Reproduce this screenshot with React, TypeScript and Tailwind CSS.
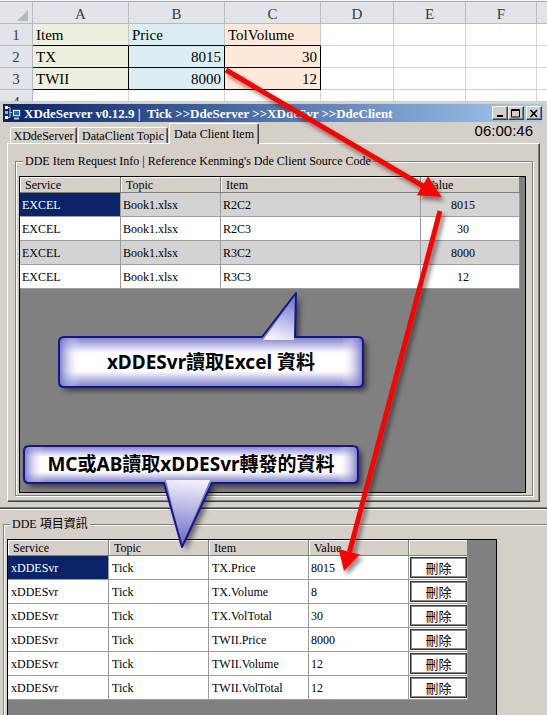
import React from "react";

const excelCols = [
  { label: "A", w: "w-[96px]" },
  { label: "B", w: "w-[96px]" },
  { label: "C", w: "w-[96px]" },
  { label: "D", w: "w-[73px]" },
  { label: "E", w: "w-[72px]" },
  { label: "F", w: "w-[71px]" },
];

const excelRows = [
  { n: "1", cells: [{ t: "Item" }, { t: "Price" }, { t: "TolVolume" }] },
  { n: "2", cells: [{ t: "TX" }, { t: "8015", r: true }, { t: "30", r: true }] },
  { n: "3", cells: [{ t: "TWII" }, { t: "8000", r: true }, { t: "12", r: true }] },
];

const fills = ["bg-[#ebf1de]", "bg-[#daeef3]", "bg-[#fde9d9]"];

const upperRows = [
  ["EXCEL", "Book1.xlsx", "R2C2", "8015"],
  ["EXCEL", "Book1.xlsx", "R2C3", "30"],
  ["EXCEL", "Book1.xlsx", "R3C2", "8000"],
  ["EXCEL", "Book1.xlsx", "R3C3", "12"],
];

const lowerRows = [
  ["xDDESvr", "Tick", "TX.Price", "8015"],
  ["xDDESvr", "Tick", "TX.Volume", "8"],
  ["xDDESvr", "Tick", "TX.VolTotal", "30"],
  ["xDDESvr", "Tick", "TWII.Price", "8000"],
  ["xDDESvr", "Tick", "TWII.Volume", "12"],
  ["xDDESvr", "Tick", "TWII.VolTotal", "12"],
];

function EmptyCells() {
  return (
    <>
      <div className="w-[73px] shrink-0 border-r border-b border-[#d4d4d4]" />
      <div className="w-[72px] shrink-0 border-r border-b border-[#d4d4d4]" />
      <div className="w-[71px] shrink-0 border-r border-b border-[#d4d4d4]" />
      <div className="flex-1 border-b border-[#d4d4d4]" />
    </>
  );
}

function ExcelSheet() {
  return (
    <div className="h-[101px] overflow-hidden bg-white text-[15px] leading-[17px]">
      <div className="h-[2px] border-b border-[#a9adb3] bg-[#f4f4f4]" />
      <div className="flex h-[22px] bg-[#e1e5ea] text-[#3a3a3a]">
        <div className="w-[33px] shrink-0 border-r border-b border-[#b6bbc2]">
          <svg width="32" height="21" viewBox="0 0 32 21">
            <polygon points="28,8 28,19 17,19" fill="#b4b8bd" />
          </svg>
        </div>
        {excelCols.map((c) => (
          <div
            key={c.label}
            className={`${c.w} shrink-0 flex items-center justify-center border-r border-b border-[#b6bbc2] pt-[3px]`}
          >
            {c.label}
          </div>
        ))}
        <div className="flex-1 border-b border-[#b6bbc2]" />
      </div>
      {excelRows.map((row) => (
        <div key={row.n} className="flex h-[22px]">
          <div className="w-[33px] shrink-0 flex items-end justify-center bg-[#e1e5ea] border-r border-b border-[#b6bbc2] pb-[1px] text-[#3a3a3a]">
            {row.n}
          </div>
          {row.cells.map((c, i) => (
            <div
              key={i}
              className={`w-[96px] shrink-0 flex items-end px-[3px] pb-[1px] border-r border-b ${
                row.n === "1" ? "border-r-[#c8c8c8] border-b-black" : "border-black"
              } ${fills[i]} ${c.r ? "justify-end" : ""}`}
            >
              {c.t}
            </div>
          ))}
          <EmptyCells />
        </div>
      ))}
      <div className="flex h-[22px]">
        <div className="w-[33px] shrink-0 flex items-end justify-center bg-[#e1e5ea] border-r border-[#b6bbc2] pb-[1px] text-[#3a3a3a]">
          4
        </div>
        <div className="w-[96px] shrink-0 border-r border-[#d4d4d4]" />
        <div className="w-[96px] shrink-0 border-r border-[#d4d4d4]" />
        <div className="w-[96px] shrink-0 border-r border-[#d4d4d4]" />
        <div className="w-[73px] shrink-0 border-r border-[#d4d4d4]" />
        <div className="w-[72px] shrink-0 border-r border-[#d4d4d4]" />
        <div className="w-[71px] shrink-0 border-r border-[#d4d4d4]" />
      </div>
    </div>
  );
}

function AppIcon() {
  return (
    <svg width="18" height="16" viewBox="0 0 18 16" className="ml-[1px] shrink-0">
      <rect x="1" y="1" width="3" height="3" fill="#ffffff" />
      <rect x="1" y="6" width="3" height="3" fill="#8fb8f0" />
      <rect x="1" y="11" width="3" height="3" fill="#ffffff" />
      <path d="M4 2.5h2v10H4M6 7.5h2" stroke="#c9d6ea" fill="none" />
      <rect x="8.5" y="4.5" width="8" height="7" fill="#e6ecf6" stroke="#2c4c8c" />
      <rect x="10" y="6" width="5" height="4" fill="#2a6ad6" />
      <rect x="10" y="12.5" width="5" height="2" fill="#c6ced9" />
    </svg>
  );
}

function CaptionBtn({ kind }: { kind: "min" | "max" | "close" }) {
  return (
    <div className="flex h-[14px] w-[16px] items-center justify-center border border-t-white border-l-white border-r-[#404040] border-b-[#404040] bg-[#d4d0c8] shadow-[inset_-1px_-1px_0_#808080]">
      <svg width="10" height="9" viewBox="0 0 10 9">
        {kind === "min" && <rect x="2" y="6" width="6" height="2" fill="#000" />}
        {kind === "max" && (
          <path d="M0.5 0.5h8v7.5h-8z M0.5 1.5h8" stroke="#000" fill="none" />
        )}
        {kind === "close" && (
          <path d="M1.5 1l6.5 7M8 1L1.5 8" stroke="#000" strokeWidth="1.6" fill="none" />
        )}
      </svg>
    </div>
  );
}

function TitleBar() {
  return (
    <div className="flex h-[18px] items-center bg-linear-to-r from-[#0a246a] to-[#a6caf0]">
      <AppIcon />
      <span className="ml-[2px] whitespace-pre text-[13px] font-bold leading-none text-white">
        {"XDdeServer v0.12.9 |  Tick >>DdeServer >>XDdeSvr >>DdeClient"}
      </span>
      <div className="ml-auto mr-[1px] flex items-center">
        <CaptionBtn kind="min" />
        <CaptionBtn kind="max" />
        <div className="w-[2px]" />
        <CaptionBtn kind="close" />
      </div>
    </div>
  );
}

function Tab({ label, w }: { label: string; w: string }) {
  return (
    <div
      className={`${w} flex h-[16px] items-center justify-center rounded-t-[2px] border-t border-l border-white border-r border-r-[#404040] bg-[#d4d0c8] text-[12px] leading-none shadow-[inset_-1px_0_0_#808080]`}
    >
      {label}
    </div>
  );
}

function UpperGrid() {
  const widths = ["w-[101px]", "w-[100px]", "w-[200px]", "w-[99px]"];
  const heads = ["Service", "Topic", "Item", "Value"];
  return (
    <div className="ml-[3px] mt-[14px] h-[317px] w-[507px] border border-black bg-[#808080] text-[12px]">
      <div className="flex h-[16px]">
        {heads.map((h, i) => (
          <div
            key={h}
            className={`${widths[i]} flex shrink-0 items-center border-r border-b border-[#808080] bg-[#d4d0c8] pl-[5px] shadow-[inset_1px_1px_0_#fff]`}
          >
            {h}
          </div>
        ))}
      </div>
      {upperRows.map((r, ri) => (
        <div key={ri} className="flex h-[24px]">
          {r.map((c, ci) => (
            <div
              key={ci}
              className={`${widths[ci]} flex shrink-0 items-center border-r border-b border-[#9d9d9d] ${
                ri === 0 && ci === 0
                  ? "bg-[#0a246a] text-white"
                  : ri % 2 === 0
                  ? "bg-[#d3d3d3]"
                  : "bg-white"
              } ${ci === 3 ? "justify-center pr-[14px]" : "pl-[2px]"}`}
            >
              {c}
            </div>
          ))}
        </div>
      ))}
    </div>
  );
}

function ServerWindow() {
  return (
    <div className="h-[408px] border-b border-[#404040] bg-[#d4d0c8] pt-[3px] pl-[3px] pr-[4px] shadow-[inset_0_-1px_0_#808080]">
      <TitleBar />
      <div className="flex h-[21px] items-end gap-[1px] pl-[7px]">
        <Tab label="XDdeServer" w="w-[67px]" />
        <Tab label="DataClient Topic" w="w-[90px]" />
        <div className="relative z-10 -mb-px flex h-[21px] w-[90px] items-center justify-center rounded-t-[2px] border-t border-l border-white border-r border-r-[#404040] bg-[#d4d0c8] text-[12px] leading-none shadow-[inset_-1px_0_0_#808080]">
          Data Client Item
        </div>
        <span className="ml-auto mr-[10px] mb-[4px] self-center font-['Liberation_Sans',sans-serif] text-[15px] leading-none">
          06:00:46
        </span>
      </div>
      <div className="ml-[4px] h-[359px] w-[533px] border border-t-white border-l-white border-r-[#404040] border-b-[#404040] shadow-[inset_-1px_-1px_0_#808080]">
        <div className="relative ml-[7px] mt-[17px] h-[335px] w-[518px] border border-[#808080] shadow-[inset_1px_1px_0_#fff,1px_1px_0_#fff]">
          <span className="absolute -top-[8px] left-[7px] whitespace-nowrap bg-[#d4d0c8] px-[2px] text-[12px] leading-[14px]">
            DDE Item Request Info | Reference Kenming's Dde Client Source Code
          </span>
          <UpperGrid />
        </div>
      </div>
    </div>
  );
}

function LowerGrid() {
  const widths = ["w-[101px]", "w-[100px]", "w-[100px]", "w-[100px]"];
  const heads = ["Service", "Topic", "Item", "Value"];
  return (
    <div className="ml-[3px] mt-[14px] h-[200px] w-[490px] border border-black bg-[#808080] text-[12px]">
      <div className="flex h-[16px]">
        {heads.map((h, i) => (
          <div
            key={h}
            className={`${widths[i]} flex shrink-0 items-center border-r border-b border-[#808080] bg-[#d4d0c8] pl-[5px] shadow-[inset_1px_1px_0_#fff]`}
          >
            {h}
          </div>
        ))}
        <div className="w-[59px] shrink-0 border-r border-b border-[#808080] bg-[#d4d0c8] shadow-[inset_1px_1px_0_#fff]" />
      </div>
      {lowerRows.map((r, ri) => (
        <div key={ri} className="flex h-[24px]">
          {r.map((c, ci) => (
            <div
              key={ci}
              className={`${widths[ci]} flex shrink-0 items-center border-r border-b border-[#9d9d9d] ${
                ri === 0 && ci === 0 ? "bg-[#0a246a] text-white" : "bg-white"
              } ${ci === 3 ? "pl-[2px]" : "pl-[3px]"}`}
            >
              {c}
            </div>
          ))}
          <div className="flex w-[59px] shrink-0 items-center border-r border-b border-[#9d9d9d] bg-white pl-[1px]">
            <div className="flex h-[21px] w-[57px] items-center justify-center border border-[#333] bg-white font-['Noto_Sans_CJK_TC',sans-serif] text-[13px] leading-none shadow-[inset_0_0_0_1px_#8a8a8a]">
              刪除
            </div>
          </div>
        </div>
      ))}
    </div>
  );
}

function ClientWindow() {
  return (
    <div className="h-[206px] overflow-hidden bg-[#d4d0c8] pl-[3px] pt-[15px] shadow-[inset_0_1px_0_#fff]">
      <div className="relative h-[240px] w-[580px] border border-[#808080] shadow-[inset_1px_1px_0_#fff,1px_1px_0_#fff]">
        <span className="absolute -top-[8px] left-[6px] whitespace-nowrap bg-[#d4d0c8] px-[2px] text-[12px] leading-[14px]">
          DDE 項目資訊
        </span>
        <LowerGrid />
      </div>
    </div>
  );
}

const callout1 =
  "M64 337 L262 337 L296 293 L295 337 L358 337 Q363 337 363 342 L363 382 Q363 387 358 387 L64 387 Q59 387 59 382 L59 342 Q59 337 64 337 Z";
const callout2 =
  "M29 446 L353 446 Q358 446 358 451 L358 478 Q358 483 353 483 L212 483 L182 547 L164 483 L29 483 Q24 483 24 478 L24 451 Q24 446 29 446 Z";

function Overlay() {
  return (
    <div className="pointer-events-none absolute inset-0">
      <svg width="547" height="715" viewBox="0 0 547 715" className="absolute left-0 top-0">
        <defs>
          <filter id="boxShadow" x="-10%" y="-20%" width="130%" height="160%">
            <feDropShadow dx="4" dy="4" stdDeviation="2.5" floodColor="#000" floodOpacity="0.5" />
          </filter>
          <filter id="arrowShadow" x="-20%" y="-20%" width="150%" height="150%">
            <feDropShadow dx="3" dy="4" stdDeviation="2" floodColor="#000" floodOpacity="0.45" />
          </filter>
          <linearGradient id="c1v" x1="0" y1="337" x2="0" y2="387" gradientUnits="userSpaceOnUse">
            <stop offset="0" stopColor="#7b7bcc" />
            <stop offset="0.32" stopColor="#ffffff" />
            <stop offset="0.68" stopColor="#ffffff" />
            <stop offset="1" stopColor="#7b7bcc" />
          </linearGradient>
          <linearGradient id="c1h" x1="59" y1="0" x2="363" y2="0" gradientUnits="userSpaceOnUse">
            <stop offset="0" stopColor="#6a6ac4" stopOpacity="0.9" />
            <stop offset="0.07" stopColor="#ffffff" stopOpacity="0" />
            <stop offset="0.93" stopColor="#ffffff" stopOpacity="0" />
            <stop offset="1" stopColor="#6a6ac4" stopOpacity="0.9" />
          </linearGradient>
          <linearGradient id="c1t" x1="296" y1="295" x2="280" y2="341" gradientUnits="userSpaceOnUse">
            <stop offset="0" stopColor="#6a6ac4" />
            <stop offset="1" stopColor="#f4f4ff" />
          </linearGradient>
          <linearGradient id="c2v" x1="0" y1="446" x2="0" y2="483" gradientUnits="userSpaceOnUse">
            <stop offset="0" stopColor="#7b7bcc" />
            <stop offset="0.3" stopColor="#ffffff" />
            <stop offset="0.7" stopColor="#ffffff" />
            <stop offset="1" stopColor="#7b7bcc" />
          </linearGradient>
          <linearGradient id="c2h" x1="24" y1="0" x2="358" y2="0" gradientUnits="userSpaceOnUse">
            <stop offset="0" stopColor="#6a6ac4" stopOpacity="0.9" />
            <stop offset="0.06" stopColor="#ffffff" stopOpacity="0" />
            <stop offset="0.94" stopColor="#ffffff" stopOpacity="0" />
            <stop offset="1" stopColor="#6a6ac4" stopOpacity="0.9" />
          </linearGradient>
          <linearGradient id="c2t" x1="188" y1="479" x2="182" y2="545" gradientUnits="userSpaceOnUse">
            <stop offset="0" stopColor="#f4f4ff" />
            <stop offset="1" stopColor="#6a6ac4" />
          </linearGradient>
        </defs>

        <g filter="url(#boxShadow)">
          <path d={callout1} fill="url(#c1v)" />
        </g>
        <path d={callout1} fill="url(#c1h)" />
        <polygon points="263,340 296,295 294,340" fill="url(#c1t)" />
        <path d={callout1} fill="none" stroke="#15158c" strokeWidth="2" strokeLinejoin="round" />

        <g filter="url(#boxShadow)">
          <path d={callout2} fill="url(#c2v)" />
        </g>
        <path d={callout2} fill="url(#c2h)" />
        <polygon points="166,480 210,480 182,545" fill="url(#c2t)" />
        <path d={callout2} fill="none" stroke="#15158c" strokeWidth="2" strokeLinejoin="round" />

        <g filter="url(#arrowShadow)">
          <line x1="226" y1="70" x2="423" y2="186" stroke="#ff0000" strokeWidth="5" />
          <polygon points="441.5,197 416.9,195.3 428.1,176.3" fill="#ff0000" />
        </g>
        <g filter="url(#arrowShadow)">
          <line x1="440" y1="211" x2="349.5" y2="552" stroke="#ff0000" strokeWidth="5" />
          <polygon points="344,571 338.6,548.9 359.8,554.5" fill="#ff0000" />
        </g>
      </svg>
      <div className="absolute left-[59px] top-[337px] flex h-[50px] w-[304px] items-center justify-center font-['Noto_Sans','Noto_Sans_CJK_TC',sans-serif] text-[19px] font-bold text-black">
        xDDESvr讀取Excel 資料
      </div>
      <div className="absolute left-[24px] top-[446px] flex h-[37px] w-[334px] items-center justify-center font-['Noto_Sans','Noto_Sans_CJK_TC',sans-serif] text-[19px] font-bold text-black">
        MC或AB讀取xDDESvr轉發的資料
      </div>
    </div>
  );
}

export default function App() {
  return (
    <div className="relative h-[715px] w-[547px] overflow-hidden bg-[#d4d0c8] font-['Liberation_Serif','Noto_Sans_CJK_TC',serif] text-black">
      <ExcelSheet />
      <ServerWindow />
      <ClientWindow />
      <Overlay />
    </div>
  );
}
